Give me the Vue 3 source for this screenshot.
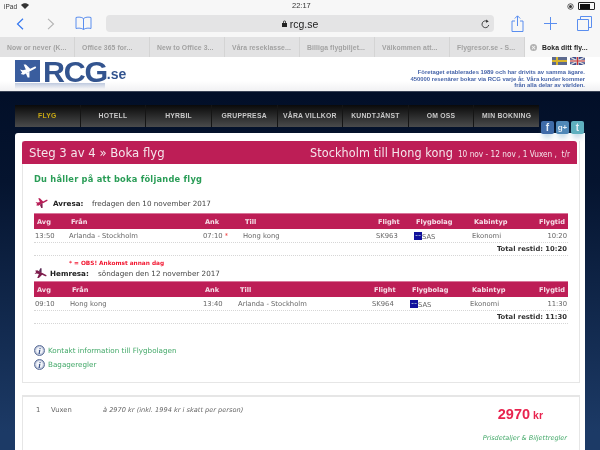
<script setup>
const tabs = ['Now or never (K...', 'Office 365 for...', 'New to Office 3...', 'Våra reseklasse...', 'Billiga flygbiljet...', 'Välkommen att...', 'Flygresor.se - S...']
const menu = ['FLYG', 'HOTELL', 'HYRBIL', 'GRUPPRESA', 'VÅRA VILLKOR', 'KUNDTJÄNST', 'OM OSS', 'MIN BOKNING']
const heads = ['Avg', 'Från', 'Ank', 'Till', 'Flight', 'Flygbolag', 'Kabintyp', 'Flygtid']
const trips = [
  {
    cls: 'out', row: ['13:50', 'Arlanda - Stockholm', '07:10', 'Hong kong', 'SK963', 'Ekonomi', '10:20'], total: '10:20'
  },
  {
    cls: 'home', row: ['09:10', 'Hong kong', '13:40', 'Arlanda - Stockholm', 'SK964', 'Ekonomi', '11:30'], total: '11:30'
  }
]
</script>

<template>
  <div class="page">
    <div class="status">
      <div class="st-left">
        <span>iPad</span>
        <svg width="8" height="6" viewBox="0 0 16 12"><path d="M8 12 0 4c4.500-4.500 11.500-4.500 16 0z" fill="#333" /></svg>
      </div>
      <span class="st-time">22:17</span>
      <div class="st-right">
        <svg width="7" height="7" viewBox="0 0 14 14"><circle cx="7" cy="7" r="5.500" fill="none" stroke="#333" stroke-width="1.500" /><circle cx="7" cy="7" r="3" fill="#333" /></svg>
        <span class="battery"><i></i></span>
      </div>
    </div>

    <div class="toolbar">
      <svg class="tb" width="8" height="12" viewBox="0 0 8 12"><path d="M7 .8 1.500 6 7 11.200" fill="none" stroke="#3478f0" stroke-width="1.200" /></svg>
      <svg class="tb fwd" width="8" height="12" viewBox="0 0 8 12"><path d="M1 .8 6.500 6 1 11.200" fill="none" stroke="#b4b4b4" stroke-width="1.100" /></svg>
      <svg class="tb book" width="17" height="15" viewBox="0 0 17 15"><path d="M8.500 2.500C6.500 1 3.500.8 1 1.500v11c2.500-.7 5.500-.5 7.500 1 2-1.500 5-1.700 7.500-1v-11c-2.500-.7-5.500-.5-7.500 1zm0 0v11" fill="none" stroke="#5a8eef" stroke-width="1" /></svg>
      <div class="url">
        <svg width="5" height="7" viewBox="0 0 10 14"><path d="M2 6V4a3 3 0 0 1 6 0v2h2v8H0V6zm1.500 0h3V4a1.500 1.500 0 0 0-3 0z" fill="#222" /></svg>
        <span>rcg.se</span>
        <svg class="reload" width="9" height="10" viewBox="0 0 18 20"><path d="M15.500 12a6.800 6.800 0 1 1-3-7.200" fill="none" stroke="#333" stroke-width="1.800" /><path d="M10.500 1l5 4-5.500 2.500z" fill="#333" /></svg>
      </div>
      <div class="actions">
        <svg width="13" height="17" viewBox="0 0 13 17"><path d="M4 6H1v10.500h11V6H9M6.500 11V1M3.800 3.500 6.500.8l2.700 2.700" fill="none" stroke="#5a8eef" stroke-width="1" /></svg>
        <svg width="13" height="13" viewBox="0 0 13 13"><path d="M6.500 0v13M0 6.500h13" stroke="#5a8eef" stroke-width="1" /></svg>
        <svg width="15" height="15" viewBox="0 0 15 15"><path d="M3.500 3.500V.5h11v11h-3" fill="none" stroke="#5a8eef" stroke-width="1" /><path d="M.5 3.500h11v11H.5z" fill="none" stroke="#5a8eef" stroke-width="1" /></svg>
      </div>
    </div>

    <div class="tabs">
      <div v-for="t in tabs" :key="t" class="tab">{{ t }}</div>
      <div class="tab active">
        <span class="close">×</span>
        <span>Boka ditt fly...</span>
      </div>
    </div>

    <header class="site-head">
      <div class="logo">
        <div class="logo-top">
          <div class="logo-box">
            <svg width="18" height="16" viewBox="0 0 24 22"><path d="M1 9l4 1 4-1-3-7 3 0 6 6 6-3c2-.5 3 1 1.500 2.200L6 16l-4-1 2-2z" fill="#fff" /><path d="M9 14l5-2 0 8-2.500 0z" fill="#fff" /></svg>
          </div>
          <span class="rcg">RCG</span><span class="se">.se</span>
        </div>
        <div class="logo-refl"></div>
      </div>
      <div class="head-right">
        <div class="flags">
          <svg width="15" height="8" viewBox="0 0 15 8"><rect width="15" height="8" fill="#5d6a8e" /><path d="M0 4h15M5 0v8" stroke="#d8b52c" stroke-width="2" /></svg>
          <svg width="15" height="8" viewBox="0 0 15 8"><rect width="15" height="8" fill="#3f4f8e" /><path d="M0 0l15 8M15 0 0 8" stroke="#ddd" stroke-width="1.300" /><path d="M0 4h15M7.500 0v8" stroke="#ddd" stroke-width="2.400" /><path d="M0 4h15M7.500 0v8" stroke="#c33" stroke-width="1.200" /></svg>
        </div>
        <p class="blurb">Företaget etablerades 1989 och har drivits av samma ägare.<br />450000 resenärer bokar via RCG varje år. Våra kunder kommer<br />från alla delar av världen.</p>
      </div>
    </header>

    <main class="site">
      <nav class="menu">
        <a v-for="(m, i) in menu" :key="m" :class="{ on: i === 0 }">{{ m }}</a>
      </nav>

      <div class="social">
        <span class="soc fb">f</span>
        <span class="soc gp">g+</span>
        <span class="soc tw">t</span>
      </div>

      <div class="card">
        <div class="panel first">
          <div class="bar">
            <h1>Steg 3 av 4 » Boka flyg</h1>
            <div class="route"><strong>Stockholm till Hong kong</strong><span>10 nov - 12 nov , 1 Vuxen ,&nbsp; t/r</span></div>
          </div>
          <div class="body">
            <h2>Du håller på att boka följande flyg</h2>

            <div class="leg leg-out">
              <svg width="13" height="12" viewBox="0 0 24 22"><path d="M1 9l4 1 4-1-3-7 3 0 6 6 6-3c2-.5 3 1 1.500 2.200L6 16l-4-1 2-2z" fill="#b81f58" /><path d="M9 14l5-2 0 8-2.500 0z" fill="#7e1c4c" /></svg>
              <b>Avresa:</b><span>fredagen den 10 november 2017</span>
            </div>

            <template v-for="(t, ti) in trips" :key="t.cls">
              <div v-if="ti === 1" class="note">* = OBS! Ankomst annan dag</div>
              <div v-if="ti === 1" class="leg leg-home">
                <svg width="13" height="12" viewBox="0 0 24 22"><path d="M1 13l4-1 4 1-3 7 3 0 6-6 6 3c2 .5 3-1 1.500-2.200L6 6 2 7l2 2z" fill="#7e1c4c" /><path d="M9 8l5 2 0-8-2.500 0z" fill="#5a2a55" /></svg>
                <b>Hemresa:</b><span>söndagen den 12 november 2017</span>
              </div>
              <div class="table" :class="t.cls">
                <div class="row thead">
                  <span v-for="h in heads" :key="h">{{ h }}</span>
                </div>
                <div class="row tdata">
                  <span>{{ t.row[0] }}</span>
                  <span>{{ t.row[1] }}</span>
                  <span>{{ t.row[2] }}<em v-if="ti === 0"> *</em></span>
                  <span>{{ t.row[3] }}</span>
                  <span>{{ t.row[4] }}</span>
                  <span class="air"><i class="sas">SAS</i>SAS</span>
                  <span>{{ t.row[5] }}</span>
                  <span>{{ t.row[6] }}</span>
                </div>
                <div class="total">Total restid: {{ t.total }}</div>
              </div>
            </template>

            <div class="links">
              <a><i class="info">i</i>Kontakt information till Flygbolagen</a>
              <a><i class="info">i</i>Bagageregler</a>
            </div>
          </div>
        </div>

        <div class="panel price">
          <div class="p-row">
            <span class="p-n">1</span>
            <span class="p-t">Vuxen</span>
            <span class="p-d">à 2970 kr <i>(inkl. 1994 kr i skatt per person)</i></span>
          </div>
          <div class="p-side">
            <div class="amount">2970<small>kr</small></div>
            <a>Prisdetaljer &amp; Biljettregler</a>
          </div>
        </div>
      </div>
    </main>
  </div>
</template>

<style scoped>
.page {
  position: relative;
  width: 600px;
  height: 450px;
  overflow: hidden;
  background: #fff;
  font-family: "DejaVu Sans", sans-serif;
  filter: blur(0.4px);
}
.status {
  height: 11px;
  box-sizing: border-box;
  background: #f7f7f7;
  display: flex;
  align-items: center;
  justify-content: space-between;
  padding: 1px 4px 0;
  position: relative;
  font: 6.500px "Liberation Sans", sans-serif;
  color: #333;
}
.st-left { display: flex; gap: 4px; align-items: center; }
.st-time { position: absolute; left: 292px; top: 1px; font-size: 7.500px; }
.st-right { display: flex; gap: 4px; align-items: center; margin-right: 1px; }
.battery { width: 14px; height: 5px; border: 0.500px solid #222; border-radius: 1px; display: block; padding: 0.500px; }
.battery i { display: block; width: 10px; height: 100%; background: #111; }
.toolbar {
  height: 26px;
  box-sizing: border-box;
  background: #f7f7f7;
  display: flex;
  align-items: center;
  padding: 0 0 1px 16px;
}
.fwd { margin-left: 23px; }
.book { margin-left: 20px; }
.url {
  width: 388px;
  height: 17px;
  margin-left: 14px;
  background: #e4e4e5;
  border-radius: 4px;
  display: flex;
  align-items: center;
  justify-content: center;
  gap: 3px;
  position: relative;
  font: 10.500px "Liberation Sans", sans-serif;
  color: #222;
}
.reload { position: absolute; right: 4px; top: 4px; }
.actions {
  display: flex;
  align-items: center;
  gap: 20px;
  margin-left: 17px;
}
.tabs {
  height: 20px;
  display: flex;
  background: #e2e2e3;
  font: 6.800px "Liberation Sans", sans-serif;
  letter-spacing: 0.100px;
  color: #a2a2a2;
}
.tab {
  width: 75px;
  padding-left: 7px;
  box-sizing: border-box;
  border-right: 1px solid #d4d4d4;
  display: flex;
  align-items: center;
  white-space: nowrap;
  font-weight: 700;
}
.tab.active {
  background: #f7f7f7;
  color: #222;
  border: 0;
  gap: 5px;
  padding-left: 5px;
}
.close {
  width: 7px;
  height: 7px;
  border-radius: 50%;
  background: #b2b2b2;
  color: #f4f4f4;
  font-size: 7px;
  line-height: 7px;
  text-align: center;
}
.site-head {
  height: 34px;
  background: linear-gradient(#fff 70%, #f1f1f3);
  display: flex;
  justify-content: space-between;
  padding: 3px 15px 0;
  box-sizing: border-box;
}
.logo { width: 120px; }
.logo-top { display: flex; align-items: flex-end; height: 22px; }
.logo-box {
  width: 25px;
  height: 22px;
  background: #3a5d9e;
  display: flex;
  align-items: center;
  justify-content: center;
  margin-right: 3px;
}
.rcg {
  font: 700 29px/30px "Liberation Sans", sans-serif;
  height: 26px;
  color: #33548f;
  letter-spacing: -1.200px;
  transform: scaleX(1.050);
  transform-origin: left;
  margin-right: 3px;
  position: relative;
  top: 1px;
}
.se {
  font: 700 14px/14px "Liberation Sans", sans-serif;
  color: #33548f;
  position: relative;
  top: -1px;
}
.logo-refl {
  width: 90px;
  height: 6px;
  margin-top: 1px;
  background: linear-gradient(rgba(58, 93, 158, 0.32), rgba(58, 93, 158, 0));
}
.head-right {
  margin-top: -3px;
  display: flex;
  flex-direction: column;
  align-items: flex-end;
}
.flags { display: flex; gap: 3px; margin-right: 0; }
.blurb {
  margin: 4px 0 0;
  font: 700 5.900px/6.500px "Liberation Sans", sans-serif;
  text-align: right;
  color: #4664a9;
}
.site {
  height: 359px;
  position: relative;
  background: linear-gradient(#020f28, #05142f 25%, #1c3a66 95%);
  padding: 13px 15px 0;
  box-sizing: border-box;
  border-top: 1px solid #3a4356;
}
.menu {
  width: 524px;
  height: 22px;
  display: flex;
  background: linear-gradient(#0a0a0a, #4a4b4c);
}
.menu a {
  flex: 1;
  text-align: center;
  border-right: 1px solid #151515;
  font: 700 6.800px/21px "Liberation Sans", sans-serif;
  letter-spacing: 0.250px;
  color: #c9c9c9;
}
.menu a:last-child { border: 0; }
.menu a.on { color: #c8a812; }
.social {
  position: absolute;
  left: 541px;
  top: 29px;
  display: flex;
  gap: 2px;
}
.soc {
  width: 13px;
  height: 13px;
  border-radius: 2px;
  text-align: center;
  font: 700 10px/13px "Liberation Sans", sans-serif;
  color: #e4edf5;
  box-shadow: 0 6px 5px -2px rgba(120, 170, 200, 0.4);
}
.fb { background: #3f6ba8; }
.gp { background: #4f88b8; font-size: 8px; }
.tw { background: #5fb0bf; }
.card {
  margin-top: 6px;
  width: 570px;
  background: #fff;
  border-radius: 3px 0 0 0;
  padding: 8px 5px 0 7px;
  box-sizing: border-box;
  height: 320px;
}
.panel {
  width: 558px;
  box-sizing: border-box;
  border: 1px solid #e6e6e6;
  border-top: 0;
  border-left-width: 1px;
}
.bar {
  height: 23px;
  margin: 0 2px 0 -1px;
  background: #bd1e56;
  border-radius: 3px 3px 0 0;
  color: #f5e6ec;
  display: flex;
  justify-content: space-between;
  align-items: center;
  padding: 0 7px;
}
h1 {
  margin: 0;
  font: 400 13px "DejaVu Sans Condensed", "DejaVu Sans", sans-serif;
}
.route { display: flex; align-items: baseline; gap: 5px; }
.route strong { font: 400 12.500px "DejaVu Sans Condensed", "DejaVu Sans", sans-serif; letter-spacing: 0.100px; }
.route span { font: 400 8.200px "DejaVu Sans Condensed", "DejaVu Sans", sans-serif; }
.body { padding: 8px 11px 0 11px; height: 218px; box-sizing: border-box; }
h2 {
  margin: 0;
  font: 700 9.200px/13px "DejaVu Sans Condensed", "DejaVu Sans", sans-serif;
  letter-spacing: 0.230px;
  color: #2a9d57;
}
.leg {
  display: flex;
  align-items: center;
  font-size: 7.200px;
  color: #444;
  height: 12px;
  white-space: nowrap;
}
.leg b { color: #222; }
.leg-out { margin: 12px 0 0 1px; }
.leg-out svg { margin-right: 5px; }
.leg-out b { width: 39px; }
.leg-home svg { margin-right: 3px; }
.leg-home b { width: 48px; }
.table { margin-top: 4px; font-size: 6.800px; }
.table.home { margin-top: 2px; }
.row { display: grid; align-items: center; }
.out .row { grid-template-columns: 34px 134px 40px 133px 38px 58px 60px 1fr; }
.home .row { grid-template-columns: 35px 133px 35px 134px 38px 60px 59px 1fr; }
.thead {
  height: 16px;
  background: #bd1e56;
  border-top: 1px solid #d9769a;
  box-sizing: border-box;
  padding: 0 3px;
  font-weight: 700;
  color: #f6dfe8;
  font-size: 6.600px;
}
.thead span:last-child, .tdata span:last-child { text-align: right; }
.tdata {
  height: 14px;
  box-sizing: border-box;
  padding: 1px 1px 0;
  color: #666;
  border-bottom: 1px dotted #d6d6d6;
}
.tdata em { color: #e22; font-style: normal; }
.air { display: flex; align-items: flex-end; }
.sas {
  width: 8px;
  height: 8px;
  background: #11119c;
  color: #dfe;
  font: 700 2.500px/8px "Liberation Sans", sans-serif;
  text-align: center;
  margin-bottom: 1px;
}
.total {
  height: 13px;
  box-sizing: border-box;
  line-height: 13px;
  text-align: right;
  padding-right: 1px;
  font-weight: 700;
  color: #333;
  border-bottom: 1px dotted #d6d6d6;
}
.note {
  margin: 3px 0 0 35px;
  height: 9px;
  line-height: 9px;
  color: #f2152f;
  font-size: 5.800px;
  font-weight: 700;
}
.leg-home { margin-top: -1px; }
.links {
  margin-top: 20px;
  display: flex;
  flex-direction: column;
  gap: 2px;
}
.links a {
  display: flex;
  align-items: center;
  gap: 3px;
  height: 12px;
  font-size: 7.200px;
  color: #42a868;
}
.info {
  width: 11px;
  height: 11px;
  border-radius: 50%;
  background: radial-gradient(#f4f6fb 40%, #6d7fa8);
  border: 0.500px solid #5d6f99;
  box-sizing: border-box;
  color: #3b5288;
  font: italic 700 9px/10px "Liberation Serif", serif;
  text-align: center;
}
.price {
  position: relative;
  margin-top: 12px;
  height: 70px;
  border-top: 2px solid #e6e6e6;
  border-bottom: 0;
  font-size: 6.800px;
  color: #666;
}
.p-row { display: flex; padding: 9px 0 0 13px; }
.p-n { width: 15px; }
.p-t { width: 52px; }
.p-d i { font-style: italic; }
.p-d { font-style: italic; font-size: 6.600px; }
.p-side {
  position: absolute;
  right: 12px;
  top: 8px;
  width: 90px;
  text-align: right;
}
.amount {
  font: 700 14.500px/18px "Liberation Sans", sans-serif;
  color: #e8244f;
  padding-right: 24px;
}
.amount small { font-size: 10.500px; margin-left: 3px; }
.p-side a {
  display: block;
  margin-top: 10px;
  font: italic 400 6.500px "DejaVu Sans", sans-serif;
  color: #42a868;
  white-space: nowrap;
}
</style>
